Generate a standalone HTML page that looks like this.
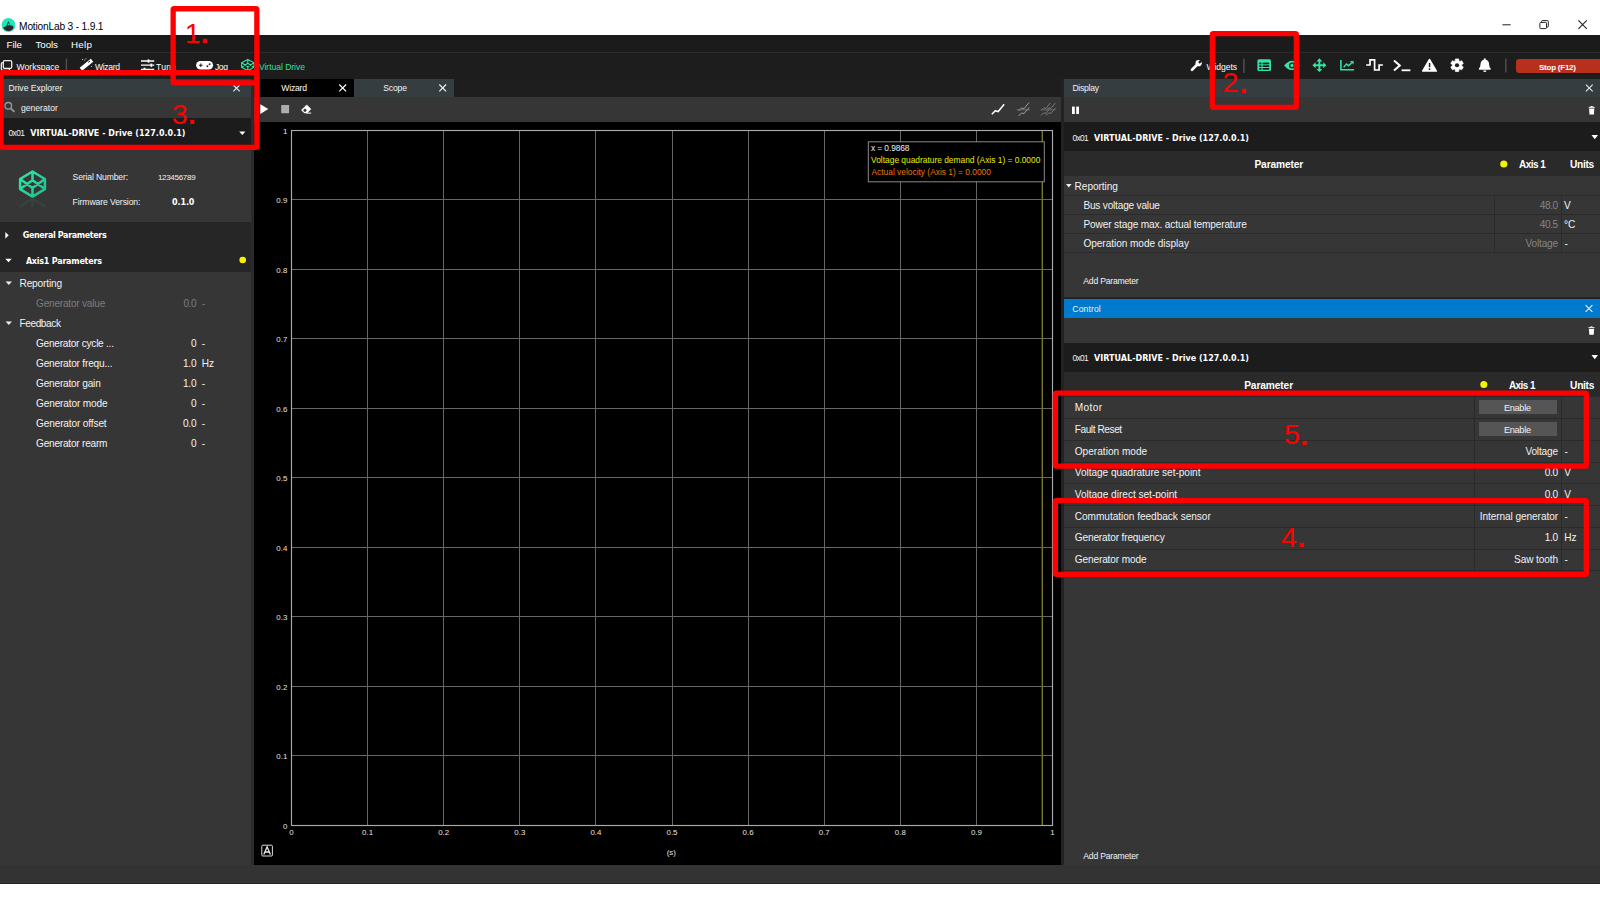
<!DOCTYPE html>
<html lang="en"><head><meta charset="utf-8"><title>MotionLab 3 - 1.9.1</title>
<style>
html,body{margin:0;padding:0;background:#fff;}
body{width:1600px;height:900px;position:relative;overflow:hidden;font-family:"Liberation Sans",sans-serif;}
#app div,#app span,#app svg{position:absolute;}
#app span{white-space:nowrap;display:block;}
#app{position:absolute;left:0;top:0;width:1600px;height:900px;overflow:hidden;}
</style></head><body><div id="app">
<div style="left:0px;top:0px;width:1600px;height:35px;background:#fff;"></div>
<div style="left:0px;top:35px;width:1600px;height:17.5px;background:#1b1b1b;"></div>
<div style="left:0px;top:52px;width:1600px;height:1px;background:#2c2c2c;"></div>
<div style="left:0px;top:53px;width:1600px;height:25.5px;background:#1d1d1d;"></div>
<div style="left:0px;top:78.5px;width:1600px;height:786px;background:#1e1e1e;"></div>
<div style="left:0px;top:864.5px;width:1600px;height:19px;background:#333;"></div>
<div style="left:0px;top:883.5px;width:1600px;height:16.5px;background:#fff;"></div>
<div style="left:0px;top:883px;width:1600px;height:0.6px;background:#222;"></div>
<div style="left:0px;top:78.5px;width:250.5px;height:18.5px;background:#363d40;"></div>
<div style="left:0px;top:97px;width:250.5px;height:21px;background:#363636;"></div>
<div style="left:0px;top:118px;width:250.5px;height:29px;background:#1c1c1c;"></div>
<div style="left:0px;top:147px;width:250.5px;height:75px;background:#363636;"></div>
<div style="left:0px;top:222px;width:250.5px;height:50px;background:#262626;"></div>
<div style="left:0px;top:272px;width:250.5px;height:592.5px;background:#363636;"></div>
<div style="left:250.5px;top:78.5px;width:3.5px;height:786px;background:#2b2b2b;"></div>
<div style="left:254px;top:78.5px;width:99.5px;height:18px;background:#000;"></div>
<div style="left:353.5px;top:78.5px;width:100px;height:18px;background:#363d40;"></div>
<div style="left:254px;top:96.5px;width:806.6px;height:25.5px;background:#363636;"></div>
<div style="left:254px;top:122px;width:806.6px;height:742.5px;background:#000;"></div>
<div style="left:1060.6px;top:78.5px;width:3.2px;height:786px;background:#222;"></div>
<div style="left:1063.8px;top:78.5px;width:536.2px;height:18.5px;background:#363d40;"></div>
<div style="left:1063.8px;top:97px;width:536.2px;height:25px;background:#363636;"></div>
<div style="left:1063.8px;top:122px;width:536.2px;height:29px;background:#1c1c1c;"></div>
<div style="left:1063.8px;top:151px;width:536.2px;height:25px;background:#2a2a2a;"></div>
<div style="left:1063.8px;top:176px;width:536.2px;height:120.5px;background:#363636;"></div>
<div style="left:1063.8px;top:296.5px;width:536.2px;height:2.8px;background:#222;"></div>
<div style="left:1063.8px;top:299.2px;width:536.2px;height:18.7px;background:#007acc;"></div>
<div style="left:1063.8px;top:317.5px;width:536.2px;height:25px;background:#363636;"></div>
<div style="left:1063.8px;top:342.5px;width:536.2px;height:29.5px;background:#1c1c1c;"></div>
<div style="left:1063.8px;top:372px;width:536.2px;height:24.5px;background:#2a2a2a;"></div>
<div style="left:1063.8px;top:396.5px;width:536.2px;height:468px;background:#363636;"></div>
<div style="left:1063.8px;top:195px;width:536.2px;height:1px;background:#2a2a2a;"></div>
<div style="left:1063.8px;top:214px;width:536.2px;height:1px;background:#2a2a2a;"></div>
<div style="left:1063.8px;top:233px;width:536.2px;height:1px;background:#2a2a2a;"></div>
<div style="left:1063.8px;top:252px;width:536.2px;height:1px;background:#2a2a2a;"></div>
<div style="left:1494px;top:195px;width:1px;height:57.5px;background:#2a2a2a;"></div>
<div style="left:1561px;top:195px;width:1px;height:57.5px;background:#2a2a2a;"></div>
<div style="left:1063.8px;top:418px;width:536.2px;height:1px;background:#2a2a2a;"></div>
<div style="left:1063.8px;top:440px;width:536.2px;height:1px;background:#2a2a2a;"></div>
<div style="left:1063.8px;top:462px;width:536.2px;height:1px;background:#2a2a2a;"></div>
<div style="left:1063.8px;top:483px;width:536.2px;height:1px;background:#2a2a2a;"></div>
<div style="left:1063.8px;top:505px;width:536.2px;height:1px;background:#2a2a2a;"></div>
<div style="left:1063.8px;top:527px;width:536.2px;height:1px;background:#2a2a2a;"></div>
<div style="left:1063.8px;top:549px;width:536.2px;height:1px;background:#2a2a2a;"></div>
<div style="left:1063.8px;top:570px;width:536.2px;height:1px;background:#2a2a2a;"></div>
<div style="left:1474px;top:396.5px;width:1px;height:173.76px;background:#2a2a2a;"></div>
<div style="left:1561px;top:396.5px;width:1px;height:173.76px;background:#2a2a2a;"></div>
<div style="left:1478.7px;top:400.3px;width:78.7px;height:14px;background:#555;"></div>
<div style="left:1478.7px;top:422px;width:78.7px;height:14px;background:#555;"></div>
<div style="left:1515.5px;top:58.5px;width:90px;height:14.5px;background:#b7301c;border-radius:3px;"></div>
<span style="left:19.10px;top:20.00px;font-size:10.2px;line-height:14px;color:#000;letter-spacing:-0.188px;">MotionLab 3 - 1.9.1</span>
<span style="left:6.50px;top:38.00px;font-size:9.8px;line-height:14px;color:#fff;letter-spacing:-0.097px;">File</span>
<span style="left:35.50px;top:38.00px;font-size:9.8px;line-height:14px;color:#fff;letter-spacing:-0.095px;">Tools</span>
<span style="left:71.00px;top:38.00px;font-size:9.8px;line-height:14px;color:#fff;letter-spacing:0.281px;">Help</span>
<span style="left:16.60px;top:61.00px;font-size:8.6px;line-height:12px;color:#fff;letter-spacing:-0.020px;">Workspace</span>
<span style="left:95.00px;top:61.00px;font-size:8.6px;line-height:12px;color:#fff;letter-spacing:-0.352px;">Wizard</span>
<span style="left:156.00px;top:61.00px;font-size:8.6px;line-height:12px;color:#fff;letter-spacing:0.239px;">Tune</span>
<span style="left:215.00px;top:61.00px;font-size:8.6px;line-height:12px;color:#fff;letter-spacing:-0.433px;">Jog</span>
<span style="left:259.00px;top:61.00px;font-size:8.6px;line-height:12px;color:#2ee0a0;letter-spacing:-0.057px;">Virtual Drive</span>
<span style="left:1206.50px;top:61.00px;font-size:8.6px;line-height:12px;color:#fff;letter-spacing:-0.094px;">Widgets</span>
<span style="left:1539.00px;top:62.00px;font-size:8.0px;line-height:11px;color:#fff;font-weight:bold;letter-spacing:-0.235px;">Stop (F12)</span>
<svg style="left:254px;top:122px" width="807" height="743" viewBox="254 122 807 743"><line x1="367.5" y1="130.5" x2="367.5" y2="825.5" stroke="#666666" stroke-width="1"/><line x1="291.5" y1="199.5" x2="1052.5" y2="199.5" stroke="#666666" stroke-width="1"/><line x1="443.5" y1="130.5" x2="443.5" y2="825.5" stroke="#666666" stroke-width="1"/><line x1="291.5" y1="269.5" x2="1052.5" y2="269.5" stroke="#666666" stroke-width="1"/><line x1="519.5" y1="130.5" x2="519.5" y2="825.5" stroke="#666666" stroke-width="1"/><line x1="291.5" y1="338.5" x2="1052.5" y2="338.5" stroke="#666666" stroke-width="1"/><line x1="595.5" y1="130.5" x2="595.5" y2="825.5" stroke="#666666" stroke-width="1"/><line x1="291.5" y1="408.5" x2="1052.5" y2="408.5" stroke="#666666" stroke-width="1"/><line x1="672.5" y1="130.5" x2="672.5" y2="825.5" stroke="#666666" stroke-width="1"/><line x1="291.5" y1="477.5" x2="1052.5" y2="477.5" stroke="#666666" stroke-width="1"/><line x1="748.5" y1="130.5" x2="748.5" y2="825.5" stroke="#666666" stroke-width="1"/><line x1="291.5" y1="547.5" x2="1052.5" y2="547.5" stroke="#666666" stroke-width="1"/><line x1="824.5" y1="130.5" x2="824.5" y2="825.5" stroke="#666666" stroke-width="1"/><line x1="291.5" y1="616.5" x2="1052.5" y2="616.5" stroke="#666666" stroke-width="1"/><line x1="900.5" y1="130.5" x2="900.5" y2="825.5" stroke="#666666" stroke-width="1"/><line x1="291.5" y1="686.5" x2="1052.5" y2="686.5" stroke="#666666" stroke-width="1"/><line x1="976.5" y1="130.5" x2="976.5" y2="825.5" stroke="#666666" stroke-width="1"/><line x1="291.5" y1="755.5" x2="1052.5" y2="755.5" stroke="#666666" stroke-width="1"/><line x1="1042.3" y1="130.5" x2="1042.3" y2="825.5" stroke="#79742f" stroke-width="1.4"/><rect x="291.5" y="130.5" width="761.0" height="695.0" fill="none" stroke="#aaaaaa" stroke-width="1.15"/><rect x="868.3" y="141.8" width="176" height="40" fill="#000" stroke="#8a8a8a" stroke-width="1"/><rect x="261.8" y="845.2" width="10.6" height="10.8" rx="1" fill="none" stroke="#ddd" stroke-width="1"/><path d="M263.8 854.5 L267.1 846.8 L270.4 854.5 M265 852 H269.2" fill="none" stroke="#eee" stroke-width="1.3"/></svg>
<span style="left:282.91px;top:126.00px;font-size:7.9px;line-height:11px;color:#e4e4e4;">1</span>
<span style="left:276.32px;top:195.00px;font-size:7.9px;line-height:11px;color:#e4e4e4;">0.9</span>
<span style="left:276.32px;top:265.00px;font-size:7.9px;line-height:11px;color:#e4e4e4;">0.8</span>
<span style="left:276.32px;top:334.00px;font-size:7.9px;line-height:11px;color:#e4e4e4;">0.7</span>
<span style="left:276.32px;top:404.00px;font-size:7.9px;line-height:11px;color:#e4e4e4;">0.6</span>
<span style="left:276.32px;top:473.00px;font-size:7.9px;line-height:11px;color:#e4e4e4;">0.5</span>
<span style="left:276.32px;top:543.00px;font-size:7.9px;line-height:11px;color:#e4e4e4;">0.4</span>
<span style="left:276.32px;top:612.00px;font-size:7.9px;line-height:11px;color:#e4e4e4;">0.3</span>
<span style="left:276.32px;top:682.00px;font-size:7.9px;line-height:11px;color:#e4e4e4;">0.2</span>
<span style="left:276.32px;top:751.00px;font-size:7.9px;line-height:11px;color:#e4e4e4;">0.1</span>
<span style="left:282.91px;top:821.00px;font-size:7.9px;line-height:11px;color:#e4e4e4;">0</span>
<span style="left:289.30px;top:827.00px;font-size:7.9px;line-height:11px;color:#e4e4e4;">0</span>
<span style="left:362.11px;top:827.00px;font-size:7.9px;line-height:11px;color:#e4e4e4;">0.1</span>
<span style="left:438.21px;top:827.00px;font-size:7.9px;line-height:11px;color:#e4e4e4;">0.2</span>
<span style="left:514.31px;top:827.00px;font-size:7.9px;line-height:11px;color:#e4e4e4;">0.3</span>
<span style="left:590.41px;top:827.00px;font-size:7.9px;line-height:11px;color:#e4e4e4;">0.4</span>
<span style="left:666.51px;top:827.00px;font-size:7.9px;line-height:11px;color:#e4e4e4;">0.5</span>
<span style="left:742.61px;top:827.00px;font-size:7.9px;line-height:11px;color:#e4e4e4;">0.6</span>
<span style="left:818.71px;top:827.00px;font-size:7.9px;line-height:11px;color:#e4e4e4;">0.7</span>
<span style="left:894.81px;top:827.00px;font-size:7.9px;line-height:11px;color:#e4e4e4;">0.8</span>
<span style="left:970.91px;top:827.00px;font-size:7.9px;line-height:11px;color:#e4e4e4;">0.9</span>
<span style="left:1050.30px;top:827.00px;font-size:7.9px;line-height:11px;color:#e4e4e4;">1</span>
<span style="left:666.69px;top:847.00px;font-size:7.9px;line-height:11px;color:#e4e4e4;">(s)</span>
<span style="left:871.00px;top:142.00px;font-size:8.4px;line-height:12px;color:#f0f0f0;letter-spacing:-0.096px;">x = 0.9868</span>
<span style="left:871.10px;top:154.00px;font-size:8.4px;line-height:12px;color:#e6ee00;">Voltage quadrature demand (Axis 1) = 0.0000</span>
<span style="left:871.50px;top:166.00px;font-size:8.4px;line-height:12px;color:#e87808;">Actual velocity (Axis 1) = 0.0000</span>
<span style="left:8.50px;top:82.00px;font-size:8.6px;line-height:12px;color:#f2f2f2;letter-spacing:-0.037px;">Drive Explorer</span>
<span style="left:21.00px;top:102.00px;font-size:8.6px;line-height:12px;color:#f2f2f2;">generator</span>
<span style="left:8.50px;top:127.00px;font-size:8.4px;line-height:12px;color:#f0f0f0;letter-spacing:-0.605px;">0x01</span>
<span style="left:30.20px;top:128.00px;font-size:8px;line-height:11px;color:#fff;font-weight:bold;font-family:'DejaVu Sans', 'Liberation Sans', sans-serif;letter-spacing:0.035px;">VIRTUAL-DRIVE - Drive (127.0.0.1)</span>
<span style="left:72.60px;top:171.00px;font-size:8.6px;line-height:12px;color:#f2f2f2;letter-spacing:-0.143px;">Serial Number:</span>
<span style="left:157.90px;top:172.00px;font-size:8px;line-height:11px;color:#f2f2f2;letter-spacing:-0.293px;">123456789</span>
<span style="left:72.60px;top:196.00px;font-size:8.6px;line-height:12px;color:#f2f2f2;letter-spacing:-0.087px;">Firmware Version:</span>
<span style="left:172.10px;top:197.00px;font-size:8px;line-height:11px;color:#fff;font-weight:bold;font-family:'DejaVu Sans', 'Liberation Sans', sans-serif;letter-spacing:-0.119px;">0.1.0</span>
<span style="left:22.70px;top:230.00px;font-size:8px;line-height:11px;color:#fff;font-weight:bold;font-family:'DejaVu Sans', 'Liberation Sans', sans-serif;letter-spacing:-0.359px;">General Parameters</span>
<span style="left:25.90px;top:256.00px;font-size:8px;line-height:11px;color:#fff;font-weight:bold;font-family:'DejaVu Sans', 'Liberation Sans', sans-serif;letter-spacing:-0.221px;">Axis1 Parameters</span>
<span style="left:19.50px;top:277.00px;font-size:10.1px;line-height:14px;color:#f2f2f2;letter-spacing:-0.149px;">Reporting</span>
<span style="left:36.00px;top:297.00px;font-size:10.1px;line-height:14px;color:#7c7c7c;letter-spacing:-0.223px;">Generator value</span>
<span style="left:183.50px;top:297.00px;font-size:10.1px;line-height:14px;color:#7c7c7c;letter-spacing:-0.520px;">0.0</span>
<span style="left:201.90px;top:297.00px;font-size:10.1px;line-height:14px;color:#7c7c7c;">-</span>
<span style="left:19.50px;top:317.00px;font-size:10.1px;line-height:14px;color:#f2f2f2;letter-spacing:-0.408px;">Feedback</span>
<span style="left:36.00px;top:337.00px;font-size:10.1px;line-height:14px;color:#f2f2f2;letter-spacing:-0.251px;">Generator cycle ...</span>
<span style="left:190.88px;top:337.00px;font-size:10.1px;line-height:14px;color:#f2f2f2;">0</span>
<span style="left:201.80px;top:337.00px;font-size:10.1px;line-height:14px;color:#f2f2f2;">-</span>
<span style="left:36.00px;top:357.00px;font-size:10.1px;line-height:14px;color:#f2f2f2;letter-spacing:-0.189px;">Generator frequ...</span>
<span style="left:183.00px;top:357.00px;font-size:10.1px;line-height:14px;color:#f2f2f2;letter-spacing:-0.270px;">1.0</span>
<span style="left:201.80px;top:357.00px;font-size:10.1px;line-height:14px;color:#f2f2f2;">Hz</span>
<span style="left:36.00px;top:377.00px;font-size:10.1px;line-height:14px;color:#f2f2f2;letter-spacing:-0.198px;">Generator gain</span>
<span style="left:183.00px;top:377.00px;font-size:10.1px;line-height:14px;color:#f2f2f2;letter-spacing:-0.270px;">1.0</span>
<span style="left:201.80px;top:377.00px;font-size:10.1px;line-height:14px;color:#f2f2f2;">-</span>
<span style="left:36.00px;top:397.00px;font-size:10.1px;line-height:14px;color:#f2f2f2;letter-spacing:-0.142px;">Generator mode</span>
<span style="left:190.88px;top:397.00px;font-size:10.1px;line-height:14px;color:#f2f2f2;">0</span>
<span style="left:201.80px;top:397.00px;font-size:10.1px;line-height:14px;color:#f2f2f2;">-</span>
<span style="left:36.00px;top:417.00px;font-size:10.1px;line-height:14px;color:#f2f2f2;letter-spacing:-0.140px;">Generator offset</span>
<span style="left:183.00px;top:417.00px;font-size:10.1px;line-height:14px;color:#f2f2f2;letter-spacing:-0.270px;">0.0</span>
<span style="left:201.80px;top:417.00px;font-size:10.1px;line-height:14px;color:#f2f2f2;">-</span>
<span style="left:36.00px;top:437.00px;font-size:10.1px;line-height:14px;color:#f2f2f2;letter-spacing:-0.226px;">Generator rearm</span>
<span style="left:190.88px;top:437.00px;font-size:10.1px;line-height:14px;color:#f2f2f2;">0</span>
<span style="left:201.80px;top:437.00px;font-size:10.1px;line-height:14px;color:#f2f2f2;">-</span>
<span style="left:1072.40px;top:82.00px;font-size:8.6px;line-height:12px;color:#f2f2f2;letter-spacing:-0.266px;">Display</span>
<span style="left:1072.40px;top:132.00px;font-size:8.4px;line-height:12px;color:#f0f0f0;letter-spacing:-0.639px;">0x01</span>
<span style="left:1094.00px;top:133.00px;font-size:8px;line-height:11px;color:#fff;font-weight:bold;font-family:'DejaVu Sans', 'Liberation Sans', sans-serif;letter-spacing:0.025px;">VIRTUAL-DRIVE - Drive (127.0.0.1)</span>
<span style="left:1254.40px;top:158.00px;font-size:10.2px;line-height:14px;color:#fff;font-weight:bold;letter-spacing:-0.113px;">Parameter</span>
<span style="left:1519.00px;top:158.00px;font-size:10.0px;line-height:14px;color:#fff;font-weight:bold;letter-spacing:-0.553px;">Axis 1</span>
<span style="left:1570.00px;top:158.00px;font-size:10.2px;line-height:14px;color:#fff;font-weight:bold;letter-spacing:-0.300px;">Units</span>
<span style="left:1074.60px;top:180.00px;font-size:10.1px;line-height:14px;color:#f2f2f2;letter-spacing:-0.049px;">Reporting</span>
<span style="left:1083.40px;top:199.00px;font-size:10.1px;line-height:14px;color:#f2f2f2;letter-spacing:-0.196px;">Bus voltage value</span>
<span style="left:1083.40px;top:218.00px;font-size:10.1px;line-height:14px;color:#f2f2f2;letter-spacing:-0.125px;">Power stage max. actual temperature</span>
<span style="left:1083.40px;top:237.00px;font-size:10.1px;line-height:14px;color:#f2f2f2;letter-spacing:-0.051px;">Operation mode display</span>
<span style="left:1539.70px;top:199.00px;font-size:10.1px;line-height:14px;color:#858585;letter-spacing:-0.386px;">48.0</span>
<span style="left:1564.00px;top:199.00px;font-size:10.1px;line-height:14px;color:#f2f2f2;">V</span>
<span style="left:1539.70px;top:218.00px;font-size:10.1px;line-height:14px;color:#858585;letter-spacing:-0.386px;">40.5</span>
<span style="left:1564.00px;top:218.00px;font-size:10.1px;line-height:14px;color:#f2f2f2;">°C</span>
<span style="left:1525.50px;top:237.00px;font-size:10.1px;line-height:14px;color:#858585;letter-spacing:-0.167px;">Voltage</span>
<span style="left:1564.60px;top:237.00px;font-size:10.1px;line-height:14px;color:#f2f2f2;">-</span>
<span style="left:1083.30px;top:275.00px;font-size:8.6px;line-height:12px;color:#f2f2f2;letter-spacing:-0.204px;">Add Parameter</span>
<span style="left:1072.30px;top:303.00px;font-size:8.6px;line-height:12px;color:#f2f2f2;letter-spacing:0.129px;">Control</span>
<span style="left:1072.40px;top:352.00px;font-size:8.4px;line-height:12px;color:#f0f0f0;letter-spacing:-0.639px;">0x01</span>
<span style="left:1094.00px;top:353.00px;font-size:8px;line-height:11px;color:#fff;font-weight:bold;font-family:'DejaVu Sans', 'Liberation Sans', sans-serif;letter-spacing:0.025px;">VIRTUAL-DRIVE - Drive (127.0.0.1)</span>
<span style="left:1244.20px;top:379.00px;font-size:10.2px;line-height:14px;color:#fff;font-weight:bold;letter-spacing:-0.113px;">Parameter</span>
<span style="left:1508.90px;top:379.00px;font-size:10.0px;line-height:14px;color:#fff;font-weight:bold;letter-spacing:-0.553px;">Axis 1</span>
<span style="left:1570.10px;top:379.00px;font-size:10.2px;line-height:14px;color:#fff;font-weight:bold;letter-spacing:-0.300px;">Units</span>
<span style="left:1074.75px;top:401.00px;font-size:10.1px;line-height:14px;color:#f2f2f2;letter-spacing:0.420px;">Motor</span>
<span style="left:1074.75px;top:423.00px;font-size:10.1px;line-height:14px;color:#f2f2f2;letter-spacing:-0.424px;">Fault Reset</span>
<span style="left:1074.75px;top:445.00px;font-size:10.1px;line-height:14px;color:#f2f2f2;letter-spacing:0.006px;">Operation mode</span>
<span style="left:1525.40px;top:445.00px;font-size:10.1px;line-height:14px;color:#f2f2f2;letter-spacing:-0.167px;">Voltage</span>
<span style="left:1564.60px;top:445.00px;font-size:10.1px;line-height:14px;color:#f2f2f2;">-</span>
<span style="left:1074.75px;top:466.00px;font-size:10.1px;line-height:14px;color:#f2f2f2;letter-spacing:-0.041px;">Voltage quadrature set-point</span>
<span style="left:1544.70px;top:466.00px;font-size:10.1px;line-height:14px;color:#f2f2f2;letter-spacing:-0.320px;">0.0</span>
<span style="left:1564.20px;top:466.00px;font-size:10.1px;line-height:14px;color:#f2f2f2;">V</span>
<span style="left:1074.75px;top:488.00px;font-size:10.1px;line-height:14px;color:#f2f2f2;letter-spacing:-0.015px;">Voltage direct set-point</span>
<span style="left:1544.70px;top:488.00px;font-size:10.1px;line-height:14px;color:#f2f2f2;letter-spacing:-0.320px;">0.0</span>
<span style="left:1564.20px;top:488.00px;font-size:10.1px;line-height:14px;color:#f2f2f2;">V</span>
<span style="left:1074.75px;top:510.00px;font-size:10.1px;line-height:14px;color:#f2f2f2;letter-spacing:-0.034px;">Commutation feedback sensor</span>
<span style="left:1479.70px;top:510.00px;font-size:10.1px;line-height:14px;color:#f2f2f2;letter-spacing:-0.078px;">Internal generator</span>
<span style="left:1564.60px;top:510.00px;font-size:10.1px;line-height:14px;color:#f2f2f2;">-</span>
<span style="left:1074.75px;top:531.00px;font-size:10.1px;line-height:14px;color:#f2f2f2;letter-spacing:-0.147px;">Generator frequency</span>
<span style="left:1544.70px;top:531.00px;font-size:10.1px;line-height:14px;color:#f2f2f2;letter-spacing:-0.320px;">1.0</span>
<span style="left:1564.20px;top:531.00px;font-size:10.1px;line-height:14px;color:#f2f2f2;">Hz</span>
<span style="left:1074.75px;top:553.00px;font-size:10.1px;line-height:14px;color:#f2f2f2;letter-spacing:-0.134px;">Generator mode</span>
<span style="left:1514.10px;top:553.00px;font-size:10.1px;line-height:14px;color:#f2f2f2;letter-spacing:-0.115px;">Saw tooth</span>
<span style="left:1564.60px;top:553.00px;font-size:10.1px;line-height:14px;color:#f2f2f2;">-</span>
<span style="left:1503.90px;top:402.00px;font-size:9.2px;line-height:13px;color:#f2f2f2;letter-spacing:-0.290px;">Enable</span>
<span style="left:1503.90px;top:424.00px;font-size:9.2px;line-height:13px;color:#f2f2f2;letter-spacing:-0.290px;">Enable</span>
<span style="left:1083.30px;top:850.00px;font-size:8.6px;line-height:12px;color:#f2f2f2;letter-spacing:-0.204px;">Add Parameter</span>
<span style="left:281.25px;top:82.00px;font-size:8.6px;line-height:12px;color:#fff;letter-spacing:-0.192px;">Wizard</span>
<span style="left:383.25px;top:82.00px;font-size:8.6px;line-height:12px;color:#f2f2f2;letter-spacing:-0.146px;">Scope</span>
<svg style="left:0;top:0" width="1600" height="900" viewBox="0 0 1600 900"><circle cx="8.45" cy="25" r="6.9" fill="#1de9b6"/><path d="M3.2 27.3L6.2 26.3L8.4 21L10.7 25.7L12.1 25.3L13.6 27.5Q12.6 30.9 8.4 30.9Q4.2 30.9 3.2 27.3Z" fill="#2a2a2e"/><path d="M8.6 22.8L9.8 25L7.7 25.3Z" fill="#1de9b6"/><path d="M1502.4 24.8H1510.7" stroke="#222" stroke-width="1"/><path d="M1541.6 22.3V21.4Q1541.6 20.6 1542.4 20.6H1547.5Q1548.3 20.6 1548.3 21.4V26.3Q1548.3 27.1 1547.5 27.1H1546.6" stroke="#222" stroke-width="1" fill="none"/><rect x="1539.9" y="22.4" width="6.6" height="6.2" rx="0.9" stroke="#222" stroke-width="1" fill="none"/><path d="M1578.3999999999999 20.400000000000002L1586.8 28.8M1586.8 20.400000000000002L1578.3999999999999 28.8" stroke="#222" stroke-width="1.1" fill="none"/><rect x="1.3" y="62.7" width="8.3" height="7.6" rx="1.3" stroke="#eee" stroke-width="1.3" fill="none"/><rect x="3.3" y="60.6" width="8.4" height="7.7" rx="1.3" stroke="#eee" stroke-width="1.3" fill="#1d1d1d"/><path d="M66.4 58.5V72" stroke="#505050" stroke-width="1.4"/><path d="M80.9 69.3L92 60.2" stroke="#fff" stroke-width="3.9"/><path d="M88.2 62.4L90 61" stroke="#222" stroke-width="1"/><circle cx="82.6" cy="59.4" r="0.55" fill="#ddd"/><circle cx="84.6" cy="60" r="0.5" fill="#ddd"/><circle cx="86" cy="58.8" r="0.5" fill="#ddd"/><circle cx="91.6" cy="66.2" r="0.55" fill="#ddd"/><path d="M141 61H154.2M141 65.2H154.2M141 69.3H154.2" stroke="#fff" stroke-width="1.3"/><rect x="147.6" y="59.4" width="1.8" height="3.2" fill="#fff"/><rect x="150.4" y="63.6" width="1.8" height="3.2" fill="#fff"/><rect x="143.6" y="67.7" width="1.8" height="3.2" fill="#fff"/><rect x="196.1" y="61" width="17" height="8.6" rx="4.3" fill="#fff"/><path d="M199 65.2H202.6M200.8 63.4V67" stroke="#222" stroke-width="1.1"/><circle cx="207.4" cy="66.3" r="0.95" fill="#222"/><circle cx="209.6" cy="64.2" r="0.95" fill="#222"/><path d="M247.80 59.40L254.00 62.79L254.00 67.31L247.80 70.70L241.60 67.31L241.60 62.79ZM241.60 62.79L247.80 66.80L254.00 62.79M241.60 67.31L247.80 63.30L254.00 67.31M247.80 59.40L247.80 63.30M247.80 66.80L247.80 70.70" fill="none" stroke="#2fe6a2" stroke-width="1.15" stroke-linejoin="round"/><linearGradient id="cg" x1="0" y1="0" x2="1" y2="1"><stop offset="0" stop-color="#2cebaa"/><stop offset="1" stop-color="#1fbd8c"/></linearGradient><path d="M32.50 171.50L44.90 179.03L44.90 189.07L32.50 196.60L20.10 189.07L20.10 179.03ZM20.10 179.03L32.50 187.94L44.90 179.03M20.10 189.07L32.50 180.16L44.90 189.07M32.50 171.50L32.50 180.16M32.50 187.94L32.50 196.60" fill="none" stroke="url(#cg)" stroke-width="2.5" stroke-linejoin="round"/><clipPath id="rf"><rect x="15" y="188.5" width="40" height="9"/></clipPath><g opacity="0.07" clip-path="url(#rf)" transform="translate(0,395.4) scale(1,-1)"><path d="M32.50 171.50L44.90 179.03L44.90 189.07L32.50 196.60L20.10 189.07L20.10 179.03ZM20.10 179.03L32.50 187.94L44.90 179.03M20.10 189.07L32.50 180.16L44.90 189.07M32.50 171.50L32.50 180.16M32.50 187.94L32.50 196.60" fill="none" stroke="#2cebaa" stroke-width="2.5" stroke-linejoin="round"/></g><path d="M1192 69.7L1197.6 64.1" stroke="#fff" stroke-width="2.7" stroke-linecap="round"/><circle cx="1198.6" cy="63.2" r="3.1" fill="#fff"/><path d="M1198.9 62.9L1202.5 59.3" stroke="#1d1d1d" stroke-width="2.3"/><path d="M1243.9 58.5V73" stroke="#505050" stroke-width="1.5"/><rect x="1257.4" y="59.3" width="13.6" height="11.8" rx="1.6" fill="#2fe6a2"/><rect x="1259.2" y="62.6" width="2.3" height="1.7" fill="#1d1d1d"/><rect x="1262.6" y="62.6" width="6.6" height="1.7" fill="#1d1d1d"/><rect x="1259.2" y="65.3" width="2.3" height="1.7" fill="#1d1d1d"/><rect x="1262.6" y="65.3" width="6.6" height="1.7" fill="#1d1d1d"/><rect x="1259.2" y="68.0" width="2.3" height="1.7" fill="#1d1d1d"/><rect x="1262.6" y="68.0" width="6.6" height="1.7" fill="#1d1d1d"/><path d="M1284.1 65.4Q1292 56 1299.9 65.4Q1292 74.8 1284.1 65.4Z" fill="#2fe6a2"/><circle cx="1292" cy="65.4" r="3" fill="#1d1d1d"/><circle cx="1292" cy="65.4" r="1.7" fill="#2fe6a2"/><path d="M1314.4 65.2H1324.4M1319.4 60.2V70.2" stroke="#2fe6a2" stroke-width="1.9"/><polygon points="1312.4,65.2 1315.6000000000001,62.2 1315.6000000000001,68.2" fill="#2fe6a2"/><polygon points="1326.4,65.2 1323.2,62.2 1323.2,68.2" fill="#2fe6a2"/><polygon points="1319.4,58.300000000000004 1316.4,61.5 1322.4,61.5" fill="#2fe6a2"/><polygon points="1319.4,72.10000000000001 1316.4,68.9 1322.4,68.9" fill="#2fe6a2"/><path d="M1340.9 60.1V69.7H1354.1" stroke="#2fe6a2" stroke-width="1.6" fill="none"/><path d="M1343.6 67.2L1346.6 64L1348.6 65.8L1352 62.4" stroke="#2fe6a2" stroke-width="1.4" fill="none"/><polygon points="1349.9,60.9 1353.6,60.9 1353.6,64.6" fill="#2fe6a2"/><path d="M1366.2 65H1370V59.9H1374.6V70H1379.1V65H1382.9" stroke="#fff" stroke-width="1.7" fill="none"/><path d="M1394 60.4L1399.8 65.4L1394 70.4" stroke="#fff" stroke-width="2" fill="none"/><path d="M1401.6 70.3H1410.4" stroke="#fff" stroke-width="1.8"/><path d="M1429.5 59.4L1436.4 71.1H1422.6Z" fill="#fff" stroke="#fff" stroke-width="1.4" stroke-linejoin="round"/><rect x="1428.8" y="63" width="1.5" height="4.2" fill="#222"/><circle cx="1429.55" cy="69.2" r="0.9" fill="#222"/><polygon points="1455.44,58.95 1458.66,58.95 1458.93,61.05 1459.75,61.53 1461.70,60.71 1463.31,63.49 1461.63,64.77 1461.63,65.73 1463.31,67.01 1461.70,69.79 1459.75,68.97 1458.93,69.45 1458.66,71.55 1455.44,71.55 1455.17,69.45 1454.35,68.97 1452.40,69.79 1450.79,67.01 1452.47,65.73 1452.47,64.77 1450.79,63.49 1452.40,60.71 1454.35,61.53 1455.17,61.05" fill="#fff" stroke="#fff" stroke-width="0.7" stroke-linejoin="round"/><circle cx="1457.05" cy="65.25" r="2.1" fill="#1d1d1d"/><path d="M1484.8 58.3Q1485.7 58.4 1485.7 59.4Q1488.9 60.3 1489.1 64.2Q1489.2 67.4 1490.7 68.6Q1491.1 69.6 1490.1 69.7H1479.5Q1478.5 69.6 1478.9 68.6Q1480.4 67.4 1480.5 64.2Q1480.7 60.3 1483.9 59.4Q1483.9 58.4 1484.8 58.3Z" fill="#fff"/><path d="M1483.1 70.4H1486.5Q1486.3 72.1 1484.8 72.1Q1483.3 72.1 1483.1 70.4Z" fill="#fff"/><path d="M1505.8 58.5V72.5" stroke="#505050" stroke-width="1.4"/><path d="M233.3 85.0L239.7 91.4M239.7 85.0L233.3 91.4" stroke="#e6e6e6" stroke-width="1.1" fill="none"/><path d="M339.3 84.5L346.09999999999997 91.30000000000001M346.09999999999997 84.5L339.3 91.30000000000001" stroke="#fff" stroke-width="1.2" fill="none"/><path d="M439.3 84.5L446.09999999999997 91.30000000000001M446.09999999999997 84.5L439.3 91.30000000000001" stroke="#f0f0f0" stroke-width="1.2" fill="none"/><path d="M1585.8999999999999 84.6L1592.7 91.4M1592.7 84.6L1585.8999999999999 91.4" stroke="#e6e6e6" stroke-width="1.1" fill="none"/><path d="M1585.6 305.1L1592.4 311.9M1592.4 305.1L1585.6 311.9" stroke="#eee" stroke-width="1.1" fill="none"/><circle cx="8.3" cy="105.8" r="3.3" stroke="#9a9a9a" stroke-width="1.3" fill="none"/><path d="M10.8 108.3L14.4 111.9" stroke="#9a9a9a" stroke-width="1.7"/><polygon points="260.3,104.2 268.3,109.1 260.3,114" fill="#fff"/><rect x="281.2" y="104.9" width="7.9" height="8.3" rx="0.7" fill="#adadad"/><path d="M306.7 104.9L310.9 109.1L307.2 112.9H304.3L301.5 110.1Z" fill="#fff" stroke="#fff" stroke-width="0.6" stroke-linejoin="round"/><path d="M303.1 110.2L305 108.4L306.9 110.3L305.3 111.9H304.7Z" fill="#363636"/><path d="M306.5 113.1H311.2" stroke="#fff" stroke-width="1"/><path d="M991.8 114.3L995.4 110.7L998.1999999999999 111.6L1004.1999999999999 104.3" stroke="#fff" stroke-width="1.5" fill="none"/><path d="M1018.5 111L1021.56 107.94L1023.94 108.705L1029.04 102.5" stroke="#a0a0a0" stroke-width="1.0" fill="none"/><path d="M1018.5 116L1021.56 112.94L1023.94 113.705L1029.04 107.5" stroke="#a0a0a0" stroke-width="1.0" fill="none"/><path d="M1016.5 109.8H1030" stroke="#808080" stroke-width="0.8"/><path d="M1041 110.5L1043.7 107.8L1045.8 108.475L1050.3 103.0" stroke="#808080" stroke-width="0.9" fill="none"/><path d="M1041 115.5L1043.7 112.8L1045.8 113.475L1050.3 108.0" stroke="#808080" stroke-width="0.9" fill="none"/><path d="M1046 110.5L1048.7 107.8L1050.8 108.475L1055.3 103.0" stroke="#808080" stroke-width="0.9" fill="none"/><path d="M1046 115.5L1048.7 112.8L1050.8 113.475L1055.3 108.0" stroke="#808080" stroke-width="0.9" fill="none"/><path d="M1041 109.8H1055.5" stroke="#707070" stroke-width="0.8"/><rect x="1072" y="106.6" width="2.8" height="7.4" fill="#fff"/><rect x="1076.2" y="106.6" width="2.8" height="7.4" fill="#fff"/><path d="M1588.7 107.3H1594.7M1590.7 106.5H1592.7" stroke="#fff" stroke-width="1"/><path d="M1589.1000000000001 108.5H1594.3L1593.9 114.4H1589.5Z" fill="#fff"/><path d="M1588.5 327.70000000000005H1594.5M1590.5 326.90000000000003H1592.5" stroke="#fff" stroke-width="1"/><path d="M1588.9 328.90000000000003H1594.1L1593.7 334.8H1589.3Z" fill="#fff"/><polygon points="239.2,131.4 245.4,131.4 242.3,134.9" fill="#fff"/><polygon points="1591.5,135 1598,135 1594.75,139.2" fill="#fff"/><polygon points="1591.5,355 1598,355 1594.75,359.2" fill="#fff"/><polygon points="5.3,232 8.7,235.35 5.3,238.7" fill="#fff"/><polygon points="5.3,258.7 11.7,258.7 8.5,262.2" fill="#fff"/><polygon points="5.6,281.6 12,281.6 8.8,285" fill="#eee"/><polygon points="5.6,321.6 12,321.6 8.8,325" fill="#eee"/><polygon points="1066,184 1071.6,184 1068.8,187.6" fill="#eee"/><circle cx="242.7" cy="260" r="3.3" fill="#f4f400"/><circle cx="1503.8" cy="164" r="3.6" fill="#f4f400"/><circle cx="1483.8" cy="384.5" r="3.5" fill="#f4f400"/><rect x="173.15" y="8.75" width="83.7" height="74.2" rx="1" fill="none" stroke="#fe0000" stroke-width="5.3"/><rect x="1212.3500000000001" y="33.65" width="83.99999999999996" height="73.7" rx="1" fill="none" stroke="#fe0000" stroke-width="5.3"/><rect x="1.0499999999999998" y="72.65" width="255.8" height="74.7" rx="1" fill="none" stroke="#fe0000" stroke-width="5.3"/><rect x="1055.3500000000001" y="393.04999999999995" width="531.0" height="73.10000000000004" rx="1" fill="none" stroke="#fe0000" stroke-width="5.3"/><rect x="1055.3500000000001" y="500.65" width="531.0" height="73.7" rx="1" fill="none" stroke="#fe0000" stroke-width="5.3"/></svg>
<span style="left:184.73px;top:13.00px;font-size:28.5px;line-height:40px;color:#fe0000;">1</span>
<span style="left:200.80px;top:14.00px;font-size:28px;line-height:39px;color:#fe0000;font-weight:bold;">.</span>
<span style="left:1222.58px;top:62.00px;font-size:28.5px;line-height:40px;color:#fe0000;">2</span>
<span style="left:1239.20px;top:64.00px;font-size:28px;line-height:39px;color:#fe0000;font-weight:bold;">.</span>
<span style="left:171.82px;top:94.00px;font-size:28.5px;line-height:40px;color:#fe0000;">3</span>
<span style="left:187.90px;top:95.00px;font-size:28px;line-height:39px;color:#fe0000;font-weight:bold;">.</span>
<span style="left:1280.94px;top:517.00px;font-size:28.5px;line-height:40px;color:#fe0000;">4</span>
<span style="left:1297.20px;top:518.00px;font-size:28px;line-height:39px;color:#fe0000;font-weight:bold;">.</span>
<span style="left:1283.96px;top:414.00px;font-size:28.5px;line-height:40px;color:#fe0000;">5</span>
<span style="left:1300.30px;top:416.00px;font-size:28px;line-height:39px;color:#fe0000;font-weight:bold;">.</span>
</div></body></html>
